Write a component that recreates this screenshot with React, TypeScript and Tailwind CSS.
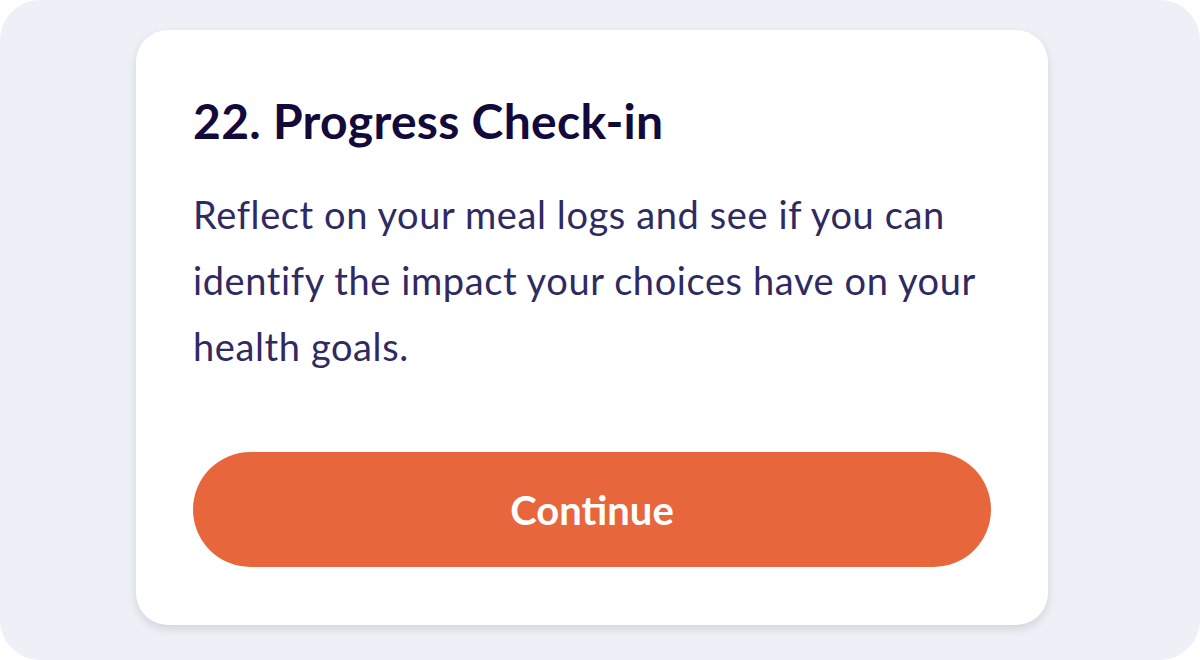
export default function App() {
  return (
    <div className="h-[660px] w-[1200px] bg-white">
      <div
        className="flex h-full w-full rounded-[40px] bg-[#eef0f8] pl-[136px] pt-[30px]"
        style={{ fontFamily: 'Lato, "Noto Sans", sans-serif' }}
      >
        <div className="flex h-[595px] w-[912px] flex-col rounded-[32px] bg-white px-[57px] pt-[67px] shadow-[0_4px_10px_rgba(0,0,0,0.12)]">
          <h1 className="text-[48px] font-bold leading-[48px] tracking-[0.3px] text-[#130a3c]">
            22. Progress Check-in
          </h1>
          <p className="mt-[36px] whitespace-nowrap text-[38px] leading-[66px] tracking-[0.6px] text-[#2f2a62]">
            Reflect on your meal logs and see if you can
            <br />
            identify the impact your choices have on your
            <br />
            health goals.
          </p>
          <button className="mt-[73px] h-[115px] w-full rounded-full bg-[#e8663c] text-[40px] font-bold text-white">
            Continue
          </button>
        </div>
      </div>
    </div>
  );
}
